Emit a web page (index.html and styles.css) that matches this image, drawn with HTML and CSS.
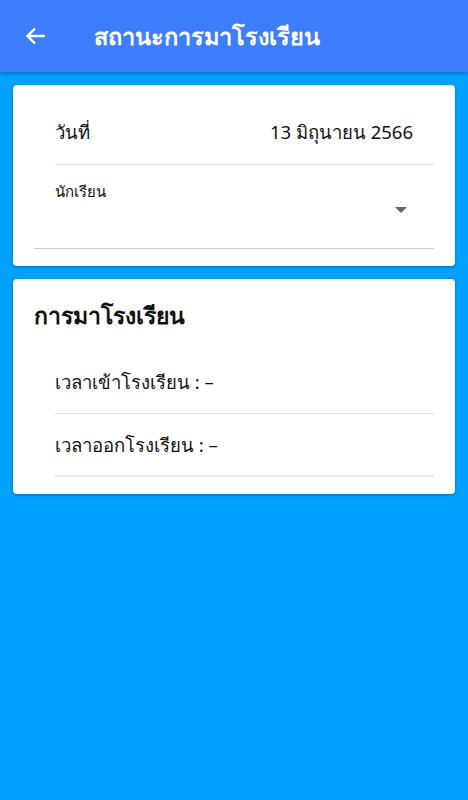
FILE: index.html
```html
<!DOCTYPE html>
<html lang="th">
<head>
  <meta charset="UTF-8">
  <meta name="viewport" content="width=device-width, initial-scale=1.0">
  <title>สถานะการมาโรงเรียน</title>
  <link rel="stylesheet" href="styles.css">
</head>
<body>
  <header class="topbar">
    <svg class="back" width="24" height="24" viewBox="0 0 24 24">
      <path d="M21 12H4M11 4.5L3.5 12l7.5 7.5" fill="none" stroke="#fff" stroke-width="2.4"/>
    </svg>
    <h1 class="title">สถานะการมาโรงเรียน</h1>
  </header>

  <main class="content">
    <section class="card">
      <div class="row date-row">
        <span>วันที่</span>
        <span>13 มิถุนายน 2566</span>
      </div>
      <div class="select">
        <label class="select-label">นักเรียน</label>
        <div class="select-field">
          <span class="caret"></span>
        </div>
      </div>
    </section>

    <section class="card">
      <h2 class="card-title">การมาโรงเรียน</h2>
      <div class="row time-row first">เวลาเข้าโรงเรียน : –</div>
      <div class="row time-row last">เวลาออกโรงเรียน : –</div>
    </section>
  </main>
</body>
</html>
```

FILE: styles.css
```css
body {
  margin: 0;
  font-family: "Noto Sans", sans-serif;
  background: #00a1ff;
  min-height: 800px;
  color: #111;
}
.topbar {
  height: 72px;
  background: #3d7eff;
  display: flex;
  align-items: center;
  padding-left: 24px;
  box-shadow: 0 2px 4px rgba(0, 0, 0, 0.25);
}
.back {
  width: 24px;
  height: 24px;
}
.title {
  margin: 0 0 0 46px;
  color: #fff;
  font-size: 23.5px;
  font-weight: bold;
  line-height: 30px;
}
.content {
  padding: 13px;
  display: flex;
  flex-direction: column;
  gap: 13px;
}
.card {
  background: #fff;
  border-radius: 4px;
  box-shadow: 0 1px 3px rgba(0, 0, 0, 0.35);
  padding: 0 21px 17px;
}
.row {
  margin-left: 21px;
  display: flex;
  justify-content: space-between;
  align-items: center;
  font-size: 18.5px;
  line-height: 30px;
  border-bottom: 1px solid #ddd;
}
.date-row {
  padding: 32px 21px 17px 0;
}
.select {
  border-bottom: 1px solid #ccc;
  height: 67px;
  padding-top: 16px;
}
.select-label {
  display: block;
  margin-left: 21px;
  font-size: 15px;
  line-height: 20px;
}
.select-field {
  display: flex;
  justify-content: flex-end;
  padding: 6px 27px 0 0;
}
.caret {
  width: 0;
  height: 0;
  border-left: 6px solid transparent;
  border-right: 6px solid transparent;
  border-top: 6px solid #666;
}
.card-title {
  margin: 0;
  padding: 22px 0 2px;
  font-size: 23px;
  font-weight: bold;
  line-height: 28px;
}
.first {
  padding: 36px 0 16px;
}
.last {
  padding: 16px 0 15px;
  border-bottom: 2px solid #e6e6e6;
}
```
